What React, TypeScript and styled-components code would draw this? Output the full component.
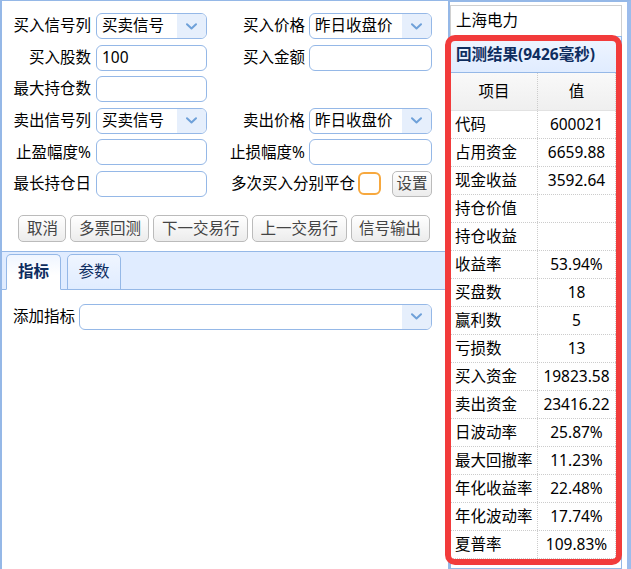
import styled, { createGlobalStyle } from "styled-components";

const GlobalStyle = createGlobalStyle`
  body {
    margin: 0;
    background: #fff;
    overflow: hidden;
    font-family: "Noto Sans", "Noto Sans CJK SC", sans-serif;
    font-size: 15.5px;
    color: #000;
  }
  * {
    box-sizing: border-box;
  }
`;

const Page = styled.div`
  position: relative;
  display: flex;
  width: 631px;
  height: 569px;
`;

const LeftPanel = styled.div`
  width: 448px;
  height: 100%;
  border-left: 2px solid #95b8e7;
  border-top: 1px solid #95b8e7;
  display: flex;
  flex-direction: column;
`;

const FormGrid = styled.div`
  display: grid;
  grid-template-columns: 94px 111px 102px 123px;
  grid-auto-rows: 26px;
  row-gap: 5.6px;
  padding-top: 12px;
`;

const Label = styled.div<{ $right?: boolean }>`
  display: flex;
  align-items: center;
  justify-content: flex-end;
  padding-right: ${(p) => (p.$right ? "4px" : "5px")};
  white-space: nowrap;
  line-height: 1;
`;

const TextBox = styled.div`
  height: 26px;
  border: 1px solid #95b8e7;
  border-radius: 6px;
  padding: 0 5px;
  display: flex;
  align-items: center;
  background: #fff;
  line-height: 1;
`;

const Combo = styled.div<{ $width?: number }>`
  height: 26px;
  width: ${(p) => (p.$width ? `${p.$width}px` : "auto")};
  border: 1px solid #95b8e7;
  border-radius: 6px;
  display: flex;
  overflow: hidden;
  background: #fff;
`;

const ComboText = styled.div`
  flex: 1;
  display: flex;
  align-items: center;
  padding-left: 5px;
  line-height: 1;
  white-space: nowrap;
`;

const ComboArrow = styled.div`
  width: 29px;
  background: #e6effc;
  display: flex;
  align-items: center;
  justify-content: center;
`;

const OptionCell = styled.div`
  grid-column: 3 / span 2;
  display: flex;
  align-items: center;
  justify-content: flex-end;
  white-space: nowrap;
  line-height: 1;
`;

const CheckBox = styled.span`
  width: 23px;
  height: 23px;
  border: 2px solid #f7a83e;
  border-radius: 6px;
  margin-left: 3px;
  margin-right: 11px;
  background: #fff;
`;

const Button = styled.button<{ $small?: boolean }>`
  height: ${(p) => (p.$small ? "26px" : "27px")};
  padding: 0 ${(p) => (p.$small ? "3.5px" : "7.5px")};
  border: 1px solid #bbb;
  border-radius: 5px;
  background: linear-gradient(#ffffff, #ececec);
  color: #444;
  font-family: inherit;
  font-size: 15.5px;
  line-height: 1;
  white-space: nowrap;
`;

const ButtonBar = styled.div`
  display: flex;
  justify-content: center;
  gap: 4px;
  margin-top: 18px;
  padding-right: 2px;
`;

const Tabs = styled.div`
  margin-top: 9px;
  flex: 1;
  display: flex;
  flex-direction: column;
`;

const TabHeader = styled.div`
  height: 39px;
  background: #e0ecff;
  border-top: 1px solid #95b8e7;
  border-bottom: 1px solid #95b8e7;
  display: flex;
  align-items: flex-end;
  gap: 6px;
  padding-left: 4px;
`;

const Tab = styled.div<{ $active?: boolean }>`
  height: 36px;
  margin-bottom: -1px;
  padding: 0 ${(p) => (p.$active ? "11px" : "10.5px")};
  border: 1px solid #95b8e7;
  border-bottom-color: ${(p) => (p.$active ? "#fff" : "#95b8e7")};
  border-radius: 5px 5px 0 0;
  background: ${(p) =>
    p.$active
      ? "linear-gradient(#eff5ff, #ffffff 60%)"
      : "linear-gradient(#eff5ff, #e0ecff)"};
  color: #0e2d5f;
  font-weight: ${(p) => (p.$active ? 700 : 400)};
  display: flex;
  align-items: center;
  line-height: 1;
`;

const TabBody = styled.div`
  padding: 14px 0 0 11px;
`;

const FieldRow = styled.div`
  display: flex;
  align-items: center;
  gap: 4px;
  line-height: 1;
`;

const RightPanel = styled.div`
  width: 183px;
  height: 100%;
  border-left: 2px solid #95b8e7;
  border-right: 4px solid #9cbcec;
  border-top: 2px solid #95b8e7;
  display: flex;
  flex-direction: column;
`;

const NameBox = styled.div`
  height: 31px;
  margin: 3px 5px 0 0;
  border: 1px solid #d0d0d0;
  border-bottom: none;
  padding-left: 5px;
  display: flex;
  align-items: center;
  line-height: 1;
`;

const ResultPanel = styled.div`
  flex: 1;
  margin-right: 5px;
  border: 1px solid #95b8e7;
  display: flex;
  flex-direction: column;
  overflow: hidden;
`;

const ResultTitle = styled.div`
  height: 36px;
  background: linear-gradient(#eff5ff, #e0ecff);
  border-bottom: 1px solid #95b8e7;
  color: #0e2d5f;
  font-weight: 700;
  padding-left: 5px;
  display: flex;
  align-items: center;
  line-height: 1;
  white-space: nowrap;
`;

const Grid = styled.div`
  width: 165px;
`;

const GridRow = styled.div<{ $head?: boolean }>`
  display: grid;
  grid-template-columns: 87px 78px;
  height: ${(p) => (p.$head ? "38px" : "28px")};
  background: ${(p) => (p.$head ? "linear-gradient(#f9f9f9, #efefef)" : "#fff")};
  border-bottom: 1px ${(p) => (p.$head ? "solid #e2e2e2" : "dotted #ccc")};
`;

const Cell = styled.div<{ $center?: boolean }>`
  display: flex;
  align-items: center;
  justify-content: ${(p) => (p.$center ? "center" : "flex-start")};
  padding-left: ${(p) => (p.$center ? "0" : "4px")};
  border-right: 1px dotted #ccc;
  line-height: 1;
  white-space: nowrap;
`;

const Highlight = styled.div`
  position: absolute;
  left: 445px;
  top: 35px;
  width: 177px;
  height: 530px;
  border: 6px solid #f23b3b;
  border-radius: 10px;
  pointer-events: none;
`;

const Chevron = () => (
  <svg width="11" height="7" viewBox="0 0 11 7">
    <path
      d="M1 1.2 L5.5 5.5 L10 1.2"
      fill="none"
      stroke="#6fa1d9"
      strokeWidth="2"
      strokeLinecap="round"
      strokeLinejoin="round"
    />
  </svg>
);

const results: [string, string][] = [
  ["代码", "600021"],
  ["占用资金", "6659.88"],
  ["现金收益", "3592.64"],
  ["持仓价值", ""],
  ["持仓收益", ""],
  ["收益率", "53.94%"],
  ["买盘数", "18"],
  ["赢利数", "5"],
  ["亏损数", "13"],
  ["买入资金", "19823.58"],
  ["卖出资金", "23416.22"],
  ["日波动率", "25.87%"],
  ["最大回撤率", "11.23%"],
  ["年化收益率", "22.48%"],
  ["年化波动率", "17.74%"],
  ["夏普率", "109.83%"],
];

export default function App() {
  return (
    <Page>
      <GlobalStyle />
      <LeftPanel>
        <FormGrid>
          <Label>买入信号列</Label>
          <Combo>
            <ComboText>买卖信号</ComboText>
            <ComboArrow>
              <Chevron />
            </ComboArrow>
          </Combo>
          <Label $right>买入价格</Label>
          <Combo>
            <ComboText>昨日收盘价</ComboText>
            <ComboArrow>
              <Chevron />
            </ComboArrow>
          </Combo>

          <Label>买入股数</Label>
          <TextBox>100</TextBox>
          <Label $right>买入金额</Label>
          <TextBox />

          <Label>最大持仓数</Label>
          <TextBox />
          <div />
          <div />

          <Label>卖出信号列</Label>
          <Combo>
            <ComboText>买卖信号</ComboText>
            <ComboArrow>
              <Chevron />
            </ComboArrow>
          </Combo>
          <Label $right>卖出价格</Label>
          <Combo>
            <ComboText>昨日收盘价</ComboText>
            <ComboArrow>
              <Chevron />
            </ComboArrow>
          </Combo>

          <Label>止盈幅度%</Label>
          <TextBox />
          <Label $right>止损幅度%</Label>
          <TextBox />

          <Label>最长持仓日</Label>
          <TextBox />
          <OptionCell>
            多次买入分别平仓
            <CheckBox />
            <Button $small>设置</Button>
          </OptionCell>
        </FormGrid>

        <ButtonBar>
          <Button>取消</Button>
          <Button>多票回测</Button>
          <Button>下一交易行</Button>
          <Button>上一交易行</Button>
          <Button>信号输出</Button>
        </ButtonBar>

        <Tabs>
          <TabHeader>
            <Tab $active>指标</Tab>
            <Tab>参数</Tab>
          </TabHeader>
          <TabBody>
            <FieldRow>
              添加指标
              <Combo $width={353}>
                <ComboText />
                <ComboArrow>
                  <Chevron />
                </ComboArrow>
              </Combo>
            </FieldRow>
          </TabBody>
        </Tabs>
      </LeftPanel>

      <RightPanel>
        <NameBox>上海电力</NameBox>
        <ResultPanel>
          <ResultTitle>回测结果(9426毫秒)</ResultTitle>
          <Grid>
            <GridRow $head>
              <Cell $center>项目</Cell>
              <Cell $center>值</Cell>
            </GridRow>
            {results.map(([name, value]) => (
              <GridRow key={name}>
                <Cell>{name}</Cell>
                <Cell $center>{value}</Cell>
              </GridRow>
            ))}
          </Grid>
        </ResultPanel>
      </RightPanel>

      <Highlight />
    </Page>
  );
}
